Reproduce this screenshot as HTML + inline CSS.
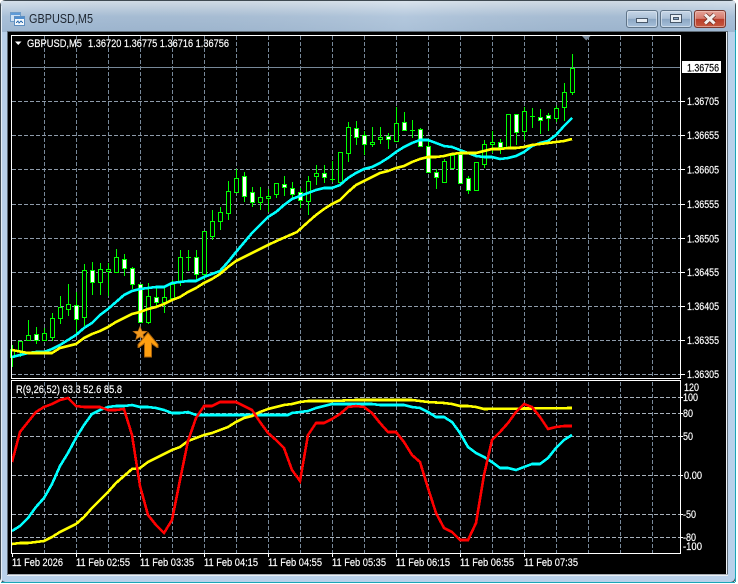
<!DOCTYPE html>
<html><head><meta charset="utf-8"><title>GBPUSD,M5</title>
<style>
html,body{margin:0;padding:0;width:738px;height:584px;overflow:hidden;background:#fff}
svg{display:block;position:absolute;left:0;top:0}
text{font-family:"Liberation Sans",sans-serif;font-size:11px;fill:#fff;stroke:#fff;stroke-width:.18px}
</style></head><body>
<svg width="738" height="584" viewBox="0 0 738 584" xmlns="http://www.w3.org/2000/svg">
<defs>
<linearGradient id="fr" x1="0" y1="0" x2="0" y2="1"><stop offset="0" stop-color="#d5e0ea"/><stop offset=".5" stop-color="#a9c0d8"/><stop offset="1" stop-color="#9fb8d2"/></linearGradient>
<linearGradient id="fr2" x1="0" y1="0" x2="1" y2="0"><stop offset="0" stop-color="#000" stop-opacity="0"/><stop offset=".55" stop-color="#fff" stop-opacity=".12"/><stop offset="1" stop-color="#000" stop-opacity="0"/></linearGradient>
<linearGradient id="btn" x1="0" y1="0" x2="0" y2="1"><stop offset="0" stop-color="#c9d8e8"/><stop offset=".48" stop-color="#a9bfd6"/><stop offset=".5" stop-color="#8ba6c3"/><stop offset="1" stop-color="#a9c2dc"/></linearGradient>
<linearGradient id="cl" x1="0" y1="0" x2="0" y2="1"><stop offset="0" stop-color="#e6a59a"/><stop offset=".48" stop-color="#d47a6c"/><stop offset=".5" stop-color="#b93d2a"/><stop offset="1" stop-color="#c75a40"/></linearGradient>
</defs>
<!-- window frame -->
<rect x="0" y="0" width="738" height="584" fill="#fff"/>
<rect x="0.5" y="0.5" width="735" height="582" rx="5" fill="#b9d1ea" stroke="#3f4a52"/>
<rect x="1" y="1" width="734" height="31" fill="url(#fr)"/>
<rect x="1" y="1" width="734" height="31" fill="url(#fr2)"/>
<path d="M1 582.5H735M735.5 30V582" stroke="#1aa6b8" fill="none"/>
<path d="M1.5 6V581" stroke="#e6eef6" fill="none"/>
<!-- client area -->
<rect x="7" y="31" width="721" height="545" fill="#e8eef4"/>
<rect x="7.5" y="31.5" width="720" height="543" fill="#000" stroke="#5f6b76"/>
<path d="M726.5 32V574M8 575H728" stroke="#eef2f6" fill="none"/>
<!-- title -->
<g shape-rendering="crispEdges">
<rect x="10.5" y="12.5" width="10" height="9" fill="#cfe2f5" stroke="#6f9cc8"/>
<rect x="11" y="13" width="9" height="2" fill="#5e9bd8"/>
<rect x="14.5" y="16.5" width="10" height="9" fill="#f4f8fc" stroke="#5f8fc0"/>
<rect x="15" y="17" width="9" height="2" fill="#4f8fd0"/>
<path d="M16 23l2-2 1 2 2-2 2 2" fill="none" stroke="#2f6fb0"/>
</g>
<text x="29" y="23" textLength="64" lengthAdjust="spacingAndGlyphs" style="font-size:12.5px;fill:#1e2630;stroke:none">GBPUSD,M5</text>
<!-- buttons -->
<rect x="626.5" y="10.5" width="31" height="17" rx="2.5" fill="url(#btn)" stroke="#5f7488"/>
<rect x="627.5" y="11.5" width="29" height="15" rx="2" fill="none" stroke="#dbe6f0" stroke-opacity=".7"/>
<rect x="636.5" y="18.5" width="11" height="4" fill="#e8eef4" stroke="#48586a"/>
<rect x="660.5" y="10.5" width="31" height="17" rx="2.5" fill="url(#btn)" stroke="#5f7488"/>
<rect x="661.5" y="11.5" width="29" height="15" rx="2" fill="none" stroke="#dbe6f0" stroke-opacity=".7"/>
<rect x="670.5" y="14.5" width="11" height="8" fill="#e8eef4" stroke="#48586a"/>
<rect x="673.5" y="17.5" width="5" height="2" fill="#8ba6c3" stroke="#48586a"/>
<rect x="694.5" y="10.5" width="31" height="17" rx="2.5" fill="url(#cl)" stroke="#7a3a30"/>
<rect x="695.5" y="11.5" width="29" height="15" rx="2" fill="none" stroke="#f0c8c0" stroke-opacity=".6"/>
<path d="M705 14.5l9.5 9M714.5 14.5l-9.5 9" stroke="#6a2a20" stroke-width="4.4" fill="none"/>
<path d="M705 14.5l9.5 9M714.5 14.5l-9.5 9" stroke="#f4f0ee" stroke-width="3" fill="none"/>

<!-- grid -->
<g shape-rendering="crispEdges" fill="none" stroke="#778899">
<path stroke-dasharray="4 2" d="M44.5 36V378M76.5 36V378M108.5 36V378M140.5 36V378M172.5 36V378M204.5 36V378M236.5 36V378M268.5 36V378M300.5 36V378M332.5 36V378M364.5 36V378M396.5 36V378M428.5 36V378M460.5 36V378M492.5 36V378M524.5 36V378M556.5 36V378M588.5 36V378M620.5 36V378M652.5 36V378"/>
<path stroke-dasharray="4 2" d="M44.5 382V553M76.5 382V553M108.5 382V553M140.5 382V553M172.5 382V553M204.5 382V553M236.5 382V553M268.5 382V553M300.5 382V553M332.5 382V553M364.5 382V553M396.5 382V553M428.5 382V553M460.5 382V553M492.5 382V553M524.5 382V553M556.5 382V553M588.5 382V553M620.5 382V553M652.5 382V553"/>
<path stroke="#8e9baa" stroke-dasharray="4 2" d="M12 101.5H680M12 135.5H680M12 169.5H680M12 204.5H680M12 238.5H680M12 272.5H680M12 306.5H680M12 340.5H680M12 374.5H680"/>
<path stroke="#a9b2bc" stroke-dasharray="4 2" d="M12 397.5H680M12 413.5H680M12 436.5H680M12 475.5H680M12 514.5H680M12 537.5H680"/>
<path d="M12 67.5H681"/>
</g>

<!-- candles: wicks -->
<path shape-rendering="crispEdges" fill="none" stroke="#00ff00" d="M12.5 345V367M20.5 341V357M28.5 320V340M36.5 327V344M44.5 328V340M52.5 313V341M60.5 296V324M68.5 284V316M76.5 292V333M84.5 264V326M92.5 262V295M100.5 263V295M108.5 263V296M116.5 249V272M124.5 254V276M132.5 267V289M148.5 283V324M156.5 286V307M164.5 287V313M172.5 280V301M180.5 250V286M188.5 250V271M186 257.5h5M196.5 250V280M204.5 231V280M212.5 210V240M220.5 207V230M228.5 181V220M236.5 169V192M244.5 172V202M252.5 187V207M260.5 187V210M268.5 189V212M276.5 183V198M284.5 176V196M292.5 182V200M300.5 188V208M308.5 176V215M316.5 165V185M324.5 165V183M332.5 161V182M330 179.5h5M348.5 122V162M356.5 121V145M364.5 131V155M372.5 127V147M380.5 127V144M388.5 133V149M396.5 107V141M404.5 112V131M412.5 120V138M410 130.5h5M420.5 128V147M428.5 140V172M436.5 169V189M444.5 159V182M452.5 153V169M460.5 154V183M468.5 176V194M476.5 162V190M484.5 140V168M492.5 131V153M500.5 139V154M516.5 114V145M524.5 107V140M532.5 108V128M530 116.5h5M540.5 109V134M548.5 113V131M556.5 106V122M564.5 83V121M572.5 54V95"/>
<!-- hollow bodies -->
<path shape-rendering="crispEdges" fill="#000" stroke="#00ff00" d="M10.5 349.5h4v8h-4zM18.5 341.5h4v10h-4zM26.5 335.5h4v5h-4zM42.5 333.5h4v7h-4zM50.5 318.5h4v19h-4zM58.5 307.5h4v11h-4zM66.5 304.5h4v5h-4zM82.5 270.5h4v47h-4zM98.5 269.5h4v13h-4zM106.5 269.5h4v2h-4zM114.5 257.5h4v15h-4zM146.5 296.5h4v26h-4zM162.5 297.5h4v5h-4zM170.5 284.5h4v14h-4zM178.5 257.5h4v25h-4zM202.5 231.5h4v43h-4zM210.5 221.5h4v15h-4zM218.5 212.5h4v9h-4zM226.5 191.5h4v22h-4zM234.5 178.5h4v14h-4zM258.5 197.5h4v5h-4zM266.5 196.5h4v2h-4zM274.5 183.5h4v11h-4zM306.5 181.5h4v20h-4zM314.5 173.5h4v3h-4zM338.5 152.5h4v30h-4zM346.5 127.5h4v26h-4zM370.5 142.5h4v2h-4zM378.5 137.5h4v2h-4zM394.5 123.5h4v18h-4zM442.5 161.5h4v21h-4zM450.5 155.5h4v13h-4zM474.5 162.5h4v28h-4zM482.5 144.5h4v20h-4zM490.5 142.5h4v2h-4zM506.5 114.5h4v33h-4zM522.5 111.5h4v20h-4zM554.5 108.5h4v10h-4zM562.5 92.5h4v15h-4zM570.5 68.5h4v24h-4z"/>
<!-- white bodies -->
<path shape-rendering="crispEdges" fill="#fff" stroke="#00ff00" d="M34.5 334.5h4v6h-4zM74.5 305.5h4v14h-4zM90.5 270.5h4v12h-4zM122.5 259.5h4v9h-4zM130.5 268.5h4v16h-4zM138.5 284.5h4v38h-4zM154.5 297.5h4v5h-4zM194.5 257.5h4v17h-4zM242.5 176.5h4v20h-4zM250.5 192.5h4v10h-4zM282.5 184.5h4v3h-4zM290.5 188.5h4v6h-4zM298.5 192.5h4v8h-4zM322.5 173.5h4v4h-4zM354.5 128.5h4v9h-4zM362.5 135.5h4v9h-4zM386.5 136.5h4v3h-4zM402.5 122.5h4v8h-4zM418.5 129.5h4v17h-4zM426.5 146.5h4v26h-4zM434.5 172.5h4v5h-4zM458.5 154.5h4v29h-4zM466.5 178.5h4v12h-4zM498.5 142.5h4v5h-4zM514.5 114.5h4v18h-4zM538.5 117.5h4v3h-4zM546.5 115.5h4v3h-4z"/>

<!-- MAs main -->
<polyline shape-rendering="crispEdges" fill="none" stroke="#00ffff" stroke-width="2.6" points="12,357 20,355 28,353 36,352 44,352 52,349 60,345 68,340 76,335 84,328 92,323 100,315 108,309 116,302 124,295 132,291 140,289 148,288 156,287 164,287 172,283 180,282 188,281 196,281 204,277 212,274 220,271 228,262 236,252 247,239 252,233 260,225 268,217 276,212 284,205 292,199 300,196 308,193 316,190 324,188 332,188 340,185 348,178 356,173 364,169 372,167 380,163 388,158 396,152 404,147 412,143 420,140 428,140 436,143 444,146 452,147 460,150 468,153 476,156 484,157 492,157 500,159 508,158 516,156 524,152 532,146 540,143 548,141 556,135 564,126 572,118"/>
<polyline shape-rendering="crispEdges" fill="none" stroke="#ffff00" stroke-width="2.6" points="12,350 28,353 44,353 52,353 60,348 68,346 76,344 84,338 92,334 100,331 108,327 116,322 124,318 132,314 140,312 148,309 156,307 164,304 172,300 180,297 188,292 196,288 204,283 212,279 220,274 228,267 236,261 244,257 252,253 260,249 270,244 281,239 297,232 308,222 316,215 324,209 332,204 340,200 348,192 356,185 364,181 372,177 380,173 388,171 396,168 404,166 412,162 420,159 428,157 436,157 444,156 452,154 460,153 468,153 476,153 484,151 492,149 500,149 508,148 516,148 524,147 532,145 540,144 548,143 556,142 564,141 572,139"/>

<!-- star and arrow -->
<path d="M140 326.5l1.9 4.6 4.9.3-3.8 3.2 1.2 4.8-4.2-2.6-4.2 2.6 1.2-4.8-3.8-3.2 4.9-.3z" fill="#f39a1e" stroke="#b86a10" stroke-width=".7"/>
<path d="M148 332.5L158 344.5V347.5H157L151.5 343.5V357H144.5V343.5L139 347.5H138V344.5Z" fill="#ff9f10" stroke="#a8620c"/>

<!-- sub lines -->
<polyline shape-rendering="crispEdges" fill="none" stroke="#00ffff" stroke-width="2.6" points="12,531 20,526 28,518 36,507 44,498 52,484 60,466 68,453 76,438 84,425 92,414 100,410 108,407 116,406 124,406 132,405 140,407 148,407 156,408 164,410 172,413 180,413 188,412 196,415 204,415 244,415 288,415 292,413 308,411 316,408 324,406 332,404 372,404 380,405 404,405 412,407 420,408 428,412 436,417 444,417 452,422 460,433 468,447 476,453 484,457 492,462 500,468 508,468 516,470 524,467 532,464 540,464 548,458 556,448 564,440 572,435"/>
<polyline shape-rendering="crispEdges" fill="none" stroke="#ffff00" stroke-width="2.6" points="12,544 20,543 28,543 36,542 44,541 52,537 60,532 68,528 76,524 84,517 92,508 100,500 108,492 116,483 124,476 132,469 140,468 148,462 156,458 164,454 172,450 180,447 188,441 196,438 204,435 212,433 220,430 228,427 236,422 244,418 252,416 260,412 268,409 276,407 284,405 292,404 300,402 308,401 332,401 356,400 412,400 420,401 428,402 444,403 452,404 460,406 468,406 476,407 484,409 572,408"/>
<polyline shape-rendering="crispEdges" fill="none" stroke="#ff0000" stroke-width="2.6" points="12,462 20,432 28,422 36,412 44,407 52,404 60,400 68,398 76,406 84,407 92,407 100,407 108,410 116,410 124,409 132,435 140,486 148,515 156,525 164,533 172,520 180,480 188,441 196,418 204,406 212,406 220,402 228,402 236,402 244,406 252,410 260,422 268,433 276,440 284,448 292,470 300,481 308,435 316,423 324,423 332,419 340,414 348,407 356,406 364,407 372,413 380,423 388,432 396,432 404,442 412,455 420,462 428,488 436,513 444,528 452,532 460,540 468,540 476,523 484,475 492,440 500,432 508,423 516,412 524,404 532,407 540,417 548,429 556,427 564,426 572,426"/>

<!-- frames -->
<g shape-rendering="crispEdges" fill="none" stroke="#fff">
<rect x="11.5" y="35.5" width="669" height="343"/>
<rect x="11.5" y="380.5" width="669" height="173"/>
<path d="M681 101.5h4M681 135.5h4M681 169.5h4M681 204.5h4M681 238.5h4M681 272.5h4M681 306.5h4M681 340.5h4M681 374.5h4M681 397.5h2M681 413.5h2M681 436.5h2M681 475.5h2M681 514.5h2M681 537.5h2M12.5 554v3M76.5 554v3M140.5 554v3M204.5 554v3M268.5 554v3M332.5 554v3M396.5 554v3M460.5 554v3M524.5 554v3"/>
</g>
<path d="M582 36h8.500l-4.250 4.500z" fill="#778899"/>
<path d="M15 41.500h6.500l-3.250 3.500z" fill="#fff"/>

<!-- legend -->
<text x="27" y="47" textLength="55" lengthAdjust="spacingAndGlyphs">GBPUSD,M5</text>
<text x="88" y="47" textLength="141" lengthAdjust="spacingAndGlyphs">1.36720 1.36775 1.36716 1.36756</text>
<text x="16" y="393" textLength="106" lengthAdjust="spacingAndGlyphs">R(9,26,52) 63.3 52.6 85.8</text>

<!-- price axis -->
<rect x="682" y="61" width="39" height="12" fill="#fff"/>
<text x="687" y="71.500" textLength="32" lengthAdjust="spacingAndGlyphs" style="fill:#000;stroke:#000">1.36756</text>
<text x="687" y="105" textLength="32" lengthAdjust="spacingAndGlyphs">1.36705</text>
<text x="687" y="139" textLength="32" lengthAdjust="spacingAndGlyphs">1.36655</text>
<text x="687" y="173.500" textLength="32" lengthAdjust="spacingAndGlyphs">1.36605</text>
<text x="687" y="208" textLength="32" lengthAdjust="spacingAndGlyphs">1.36555</text>
<text x="687" y="242.500" textLength="32" lengthAdjust="spacingAndGlyphs">1.36505</text>
<text x="687" y="276" textLength="32" lengthAdjust="spacingAndGlyphs">1.36455</text>
<text x="687" y="310" textLength="32" lengthAdjust="spacingAndGlyphs">1.36405</text>
<text x="687" y="344" textLength="32" lengthAdjust="spacingAndGlyphs">1.36355</text>
<text x="687" y="378" textLength="32" lengthAdjust="spacingAndGlyphs">1.36305</text>
<!-- sub axis -->
<text x="684" y="391" textLength="15" lengthAdjust="spacingAndGlyphs">120</text>
<text x="683" y="401" textLength="15" lengthAdjust="spacingAndGlyphs">100</text>
<text x="683" y="417" textLength="10" lengthAdjust="spacingAndGlyphs">80</text>
<text x="683" y="440" textLength="10" lengthAdjust="spacingAndGlyphs">50</text>
<text x="684" y="479" textLength="18" lengthAdjust="spacingAndGlyphs">0.00</text>
<text x="683" y="518" textLength="13" lengthAdjust="spacingAndGlyphs">-50</text>
<text x="683" y="541" textLength="13" lengthAdjust="spacingAndGlyphs">-80</text>
<text x="683" y="550" textLength="19" lengthAdjust="spacingAndGlyphs">-100</text>
<!-- time axis -->
<text x="12" y="566" textLength="51" lengthAdjust="spacingAndGlyphs">11 Feb 2026</text>
<text x="76" y="566" textLength="54" lengthAdjust="spacingAndGlyphs">11 Feb 02:55</text>
<text x="140" y="566" textLength="54" lengthAdjust="spacingAndGlyphs">11 Feb 03:35</text>
<text x="204" y="566" textLength="54" lengthAdjust="spacingAndGlyphs">11 Feb 04:15</text>
<text x="268" y="566" textLength="54" lengthAdjust="spacingAndGlyphs">11 Feb 04:55</text>
<text x="332" y="566" textLength="54" lengthAdjust="spacingAndGlyphs">11 Feb 05:35</text>
<text x="396" y="566" textLength="54" lengthAdjust="spacingAndGlyphs">11 Feb 06:15</text>
<text x="460" y="566" textLength="54" lengthAdjust="spacingAndGlyphs">11 Feb 06:55</text>
<text x="524" y="566" textLength="54" lengthAdjust="spacingAndGlyphs">11 Feb 07:35</text>
</svg>
</body></html>
